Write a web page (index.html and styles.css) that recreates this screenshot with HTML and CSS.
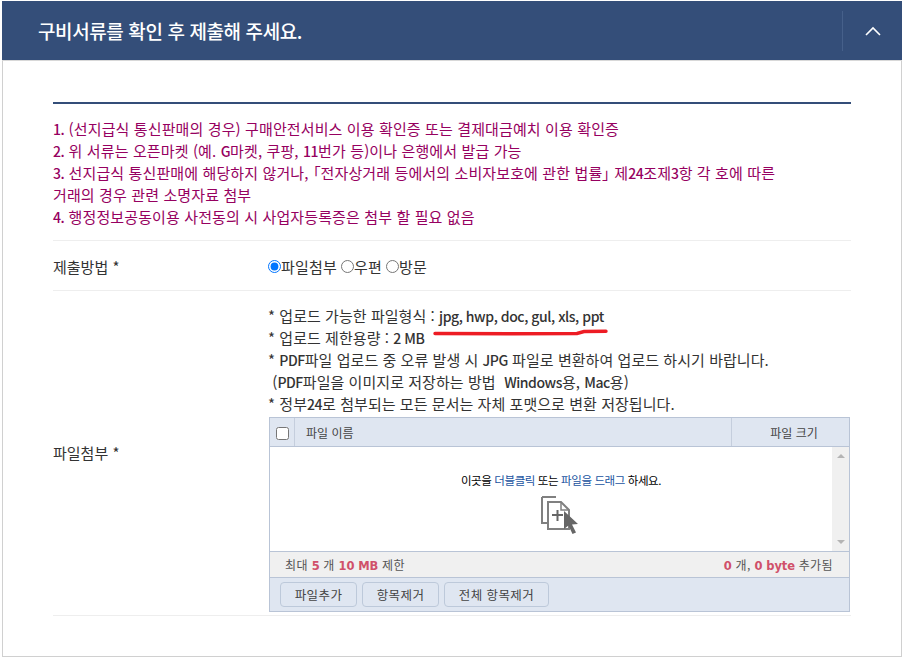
FILE: index.html
```html
<!DOCTYPE html>
<html lang="ko">
<head>
	<meta charset="utf-8">
	<title>구비서류 제출</title>
	<link rel="stylesheet" href="styles.css">
</head>
<body>

	<div class="panel">

		<div class="panelHead">
			<h2>구비서류를 확인 후 제출해 주세요.</h2>
			<div class="toggle">
				<svg width="16" height="10" viewBox="0 0 16 10"><path d="M1 9 L8 2 L15 9" fill="none" stroke="#fff" stroke-width="1.6"/></svg>
			</div>
		</div>

		<div class="panelBody">

			<div class="notice">
				<p><b>1.</b> (선지급식 통신판매의 경우) 구매안전서비스 이용 확인증 또는 결제대금예치 이용 확인증</p>
				<p><b>2.</b> 위 서류는 오픈마켓 (예. <b>G</b>마켓, 쿠팡, <b>11</b>번가 등)이나 은행에서 발급 가능</p>
				<p><b>3.</b> 선지급식 통신판매에 해당하지 않거나, <span class="bracket">「</span>전자상거래 등에서의 소비자보호에 관한 법률<span class="bracket">」</span> 제<b>24</b>조제<b>3</b>항 각 호에 따른<br>거래의 경우 관련 소명자료 첨부</p>
				<p><b>4.</b> 행정정보공동이용 사전동의 시 사업자등록증은 첨부 할 필요 없음</p>
			</div>

			<div class="row rowMethod">
				<div class="rowLabel">제출방법 *</div>
				<div class="rowValue radios">
					<label><input type="radio" name="method" checked>파일첨부</label>
					<label><input type="radio" name="method">우편</label>
					<label><input type="radio" name="method">방문</label>
				</div>
			</div>

			<div class="row rowFile">
				<div class="rowLabel">파일첨부 *</div>
				<div class="rowValue">
					<div class="guide">
						<p>* 업로드 가능한 파일형식 : <b>jpg, hwp, doc, gul, xls, ppt</b></p>
						<p>* 업로드 제한용량 : <b>2 MB</b></p>
						<p>* <b>PDF</b>파일 업로드 중 오류 발생 시 <b>JPG</b> 파일로 변환하여 업로드 하시기 바랍니다.</p>
						<p>&nbsp;(<b>PDF</b>파일을 이미지로 저장하는 방법 &nbsp;<b>Windows</b>용, <b>Mac</b>용)</p>
						<p>* 정부<b>24</b>로 첨부되는 모든 문서는 자체 포맷으로 변환 저장됩니다.</p>
						<svg class="redLine" width="180" height="10" viewBox="0 0 180 10"><path d="M3 7.5 L80 7.8 L145 7.5 L152 5.5 L174 5.2" fill="none" stroke="#ed1c24" stroke-width="3.4" stroke-linecap="round"/></svg>
					</div>

					<div class="uploader">
						<div class="upHead">
							<div class="upCheck"><input type="checkbox"></div>
							<div class="upName">파일 이름</div>
							<div class="upSize">파일 크기</div>
						</div>
						<div class="upBody">
							<div class="dropArea">
								<div class="dropText">이곳을 <span>더블클릭</span> 또는 <span>파일을 드래그</span> 하세요.</div>
								<svg class="dropIcon" width="40" height="40" viewBox="0 0 40 40">
									<path d="M3 3 H17 M3 3 V29 H9" fill="none" stroke="#808080" stroke-width="2"/>
									<path d="M9 8 H22 L30 16 V35 H9 Z" fill="#fff" stroke="#808080" stroke-width="2"/>
									<path d="M22 8 V16 H30" fill="none" stroke="#808080" stroke-width="1.5"/>
									<path d="M13 21 H24 M18.500 16 V27" fill="none" stroke="#666" stroke-width="2"/>
									<path d="M25 17 L25 35 L29.500 31.500 L33.500 40 L37 38.500 L33 30.500 L39 30 Z" fill="#666"/>
								</svg>
							</div>
							<div class="scrollBar">
								<i class="arrowUp"></i>
								<i class="arrowDown"></i>
							</div>
						</div>
						<div class="upStatus">
							<div>최대 <b>5</b> 개 <b>10 MB</b> 제한</div>
							<div><b>0</b> 개, <b>0 byte</b> 추가됨</div>
						</div>
						<div class="upButtons">
							<button type="button">파일추가</button>
							<button type="button">항목제거</button>
							<button type="button">전체 항목제거</button>
						</div>
					</div>
				</div>
			</div>

		</div>
	</div>

</body>
</html>
```

FILE: styles.css
```css
html,body {
	margin:0;
	padding:0;
	}
body {
	background-color:#fff;
	font-family:"Noto Sans CJK KR","Noto Sans",sans-serif;
	font-size:15px;
	color:#333;
	}

.panel {
	width:900px;
	height:656px;
	margin:1px 0 0 2px;
	box-sizing:border-box;
	border:1px solid #d0d0d0;
	border-top:0;
	}

.panelHead {
	display:flex;
	align-items:center;
	justify-content:space-between;
	height:59px;
	margin:0 -1px;
	background-color:#344e79;
	border-bottom:1px solid #d8d8d8;
	}
.panelHead h2 {
	margin:0 0 0 36px;
	font-size:19px;
	font-weight:500;
	letter-spacing:-0.4px;
	color:#fff;
	}
.toggle {
	display:flex;
	align-items:center;
	justify-content:center;
	width:59px;
	height:40px;
	border-left:1px solid #46608a;
	}

.panelBody {
	margin:41px 50px 0 50px;
	border-top:2px solid #344e79;
	}

.notice {
	padding:14px 0 12px 0;
	border-bottom:1px solid #eee;
	font-size:15px;
	line-height:22px;
	letter-spacing:0.12px;
	color:#960060;
	}
.notice p {
	margin:0;
	}
.notice b,.guide b {
	font-weight:500;
	font-size:14px;
	letter-spacing:-0.45px;
	}
.bracket {
	font-feature-settings:"palt";
	}

.row {
	display:flex;
	border-bottom:1px solid #eee;
	}
.rowLabel {
	width:215px;
	flex-shrink:0;
	}
.rowValue {
	flex:1;
	}

.rowMethod {
	height:49px;
	align-items:center;
	}
.rowMethod .rowLabel {
	font-size:15px;
	margin-top:1px;
	}
.radios {
	display:flex;
	font-size:15px;
	letter-spacing:0.2px;
	margin-top:1px;
	}
.radios label {
	display:flex;
	align-items:center;
	margin-right:4px;
	}
.radios input {
	width:13px;
	height:13px;
	margin:1px 0 0 0;
	accent-color:#0075ff;
	}

.rowFile {
	height:324px;
	align-items:center;
	}
.rowFile .rowLabel {
	font-size:15px;
	margin-top:-1px;
	}
.rowFile .rowValue {
	align-self:flex-start;
	padding-top:14px;
	}

.guide {
	position:relative;
	font-size:15px;
	line-height:22px;
	letter-spacing:0.05px;
	}
.guide p {
	margin:0;
	}
.redLine {
	position:absolute;
	left:164px;
	top:21px;
	}

.uploader {
	width:581px;
	margin:2px 0 0 1px;
	box-sizing:border-box;
	border:1px solid #b9c4d6;
	font-size:12px;
	color:#444;
	}
.upHead {
	display:flex;
	height:28px;
	background-color:#dfe6f1;
	border-bottom:1px solid #b9c4d6;
	}
.upCheck {
	display:flex;
	align-items:center;
	justify-content:center;
	width:24px;
	border-right:1px solid #c5cedd;
	}
.upCheck input {
	width:13px;
	height:13px;
	margin:2px 0 0 0;
	}
.upName {
	flex:1;
	padding-left:11px;
	line-height:29px;
	}
.upSize {
	width:110px;
	padding-left:7px;
	text-align:center;
	line-height:29px;
	border-left:1px solid #c5cedd;
	}

.upBody {
	display:flex;
	height:104px;
	border-bottom:1px solid #b9c4d6;
	}
.dropArea {
	flex:1;
	display:flex;
	flex-direction:column;
	align-items:center;
	padding:23px 0 0 20px;
	color:#000;
	font-size:11.5px;
	letter-spacing:-0.4px;
	line-height:20px;
	}
.dropText span {
	color:#19539f;
	}
.dropIcon {
	margin-top:4px;
	margin-right:5px;
	}
.scrollBar {
	position:relative;
	width:17px;
	background-color:#f0f0f0;
	}
.arrowUp,.arrowDown {
	position:absolute;
	left:5px;
	width:0;
	height:0;
	border-left:4px solid transparent;
	border-right:4px solid transparent;
	}
.arrowUp {
	top:7px;
	border-bottom:4px solid #b4b4b4;
	}
.arrowDown {
	bottom:7px;
	border-top:4px solid #b4b4b4;
	}

.upStatus {
	display:flex;
	justify-content:space-between;
	height:25px;
	padding:0 16px 0 15px;
	background-color:#f0f0f0;
	border-bottom:1px solid #b9c4d6;
	line-height:25px;
	letter-spacing:0.4px;
	color:#555;
	}
.upStatus b {
	color:#d0506a;
	font-family:"DejaVu Sans","Noto Sans CJK KR",sans-serif;
	font-size:11.5px;
	letter-spacing:-0.1px;
	}

.upButtons {
	display:flex;
	gap:5px;
	height:33px;
	padding:4px 10px 0 10px;
	box-sizing:border-box;
	background-color:#dfe6f1;
	}
.upButtons button {
	width:77px;
	height:25px;
	padding:0;
	background-color:#dfe6f1;
	border:1px solid #bdc9da;
	border-radius:4px;
	font-family:inherit;
	font-size:12.5px;
	letter-spacing:0.4px;
	color:#444;
	}
.upButtons button:nth-child(3) {
	width:105px;
	}
```
